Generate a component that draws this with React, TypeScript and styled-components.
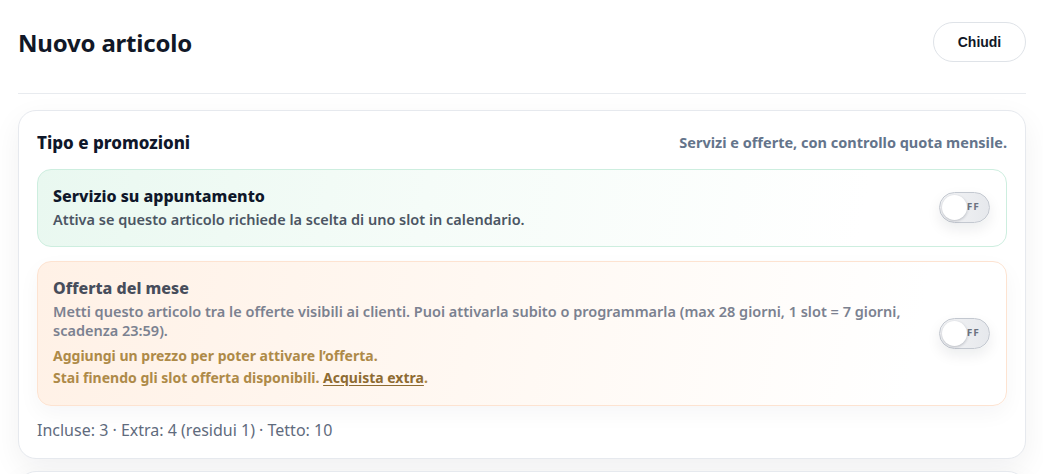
import React from "react";
import styled, { createGlobalStyle } from "styled-components";

const GlobalStyles = createGlobalStyle({
  "*": { boxSizing: "border-box" },
  body: {
    margin: 0,
    background: "#ffffff",
    fontFamily: "'Noto Sans', 'Open Sans', sans-serif",
    color: "#0f172a"
  }
});

const Page = styled.div({
  padding: "22px 17px 0 18px",
  display: "flex",
  flexDirection: "column"
});

const Header = styled.header({
  display: "flex",
  alignItems: "center",
  justifyContent: "space-between",
  height: 40
});

const Title = styled.h1({
  margin: 0,
  fontSize: 24,
  fontWeight: 700,
  color: "#111827",
  letterSpacing: -0.2
});

const CloseButton = styled.button({
  height: 40,
  width: 93,
  borderRadius: 999,
  border: "1px solid #dfe3e8",
  background: "#ffffff",
  fontFamily: "'Liberation Sans', Arial, sans-serif",
  fontWeight: 700,
  fontSize: 14,
  color: "#111827",
  cursor: "pointer"
});

const Divider = styled.hr({
  margin: "31px 0 16px",
  border: 0,
  borderTop: "1px solid #e8ebef"
});

const Card = styled.section({
  border: "1px solid #e6e9ee",
  borderRadius: 18,
  background: "#ffffff",
  boxShadow: "0 10px 30px rgba(15, 23, 42, 0.06)",
  padding: 18,
  display: "flex",
  flexDirection: "column",
  gap: 14
});

const NextCard = styled(Card)({
  marginTop: 12,
  height: 40
});

const CardHead = styled.div({
  display: "flex",
  alignItems: "center",
  justifyContent: "space-between",
  height: 26
});

const CardTitle = styled.h2({
  margin: 0,
  fontSize: 17,
  fontWeight: 800,
  color: "#0f172a"
});

const CardHint = styled.span({
  fontSize: 14.5,
  fontWeight: 700,
  color: "#64748b"
});

const Option = styled.div<{ $tone: "green" | "orange" }>(p => ({
  display: "flex",
  alignItems: "center",
  gap: 20,
  padding: "16px 15px",
  borderRadius: 14,
  border: p.$tone === "green" ? "1px solid #cdeedf" : "1px solid #fde3d1",
  background:
    p.$tone === "green"
      ? "linear-gradient(100deg, #e9f8f0 0%, #f5fcf8 40%, #ffffff 85%)"
      : "linear-gradient(100deg, #fff1e6 0%, #fff8f2 45%, #ffffff 90%)",
  boxShadow: p.$tone === "orange" ? "0 8px 22px rgba(15, 23, 42, 0.04)" : "none"
}));

const OptionText = styled.div({
  flex: 1,
  display: "flex",
  flexDirection: "column"
});

const OptionTitle = styled.div<{ $muted?: boolean }>(p => ({
  fontSize: 16,
  fontWeight: 800,
  lineHeight: "20px",
  color: p.$muted ? "#474d5b" : "#0f172a",
  marginBottom: 4
}));

const OptionDesc = styled.div<{ $muted?: boolean }>(p => ({
  fontSize: 14.5,
  fontWeight: 600,
  lineHeight: "19.5px",
  color: p.$muted ? "#7b8190" : "#4b5563"
}));

const Warning = styled.div<{ $first?: boolean }>(p => ({
  fontSize: 14,
  fontWeight: 700,
  lineHeight: "22px",
  color: "#ae8a48",
  marginTop: p.$first ? 4 : 0
}));

const WarningLink = styled.a({
  color: "#8e6b32",
  textDecoration: "underline",
  textUnderlineOffset: 2
});

const Toggle = styled.div({
  position: "relative",
  width: 51,
  height: 31,
  flexShrink: 0,
  borderRadius: 999,
  border: "1px solid #c3c8d0",
  background: "linear-gradient(90deg, #f3f4f6, #e6e8ec)",
  boxShadow: "0 6px 14px rgba(15, 23, 42, 0.08)",
  display: "flex",
  alignItems: "center",
  justifyContent: "flex-end",
  paddingRight: 9,
  marginRight: 1
});

const ToggleLabel = styled.span({
  fontFamily: "'DejaVu Sans', sans-serif",
  fontSize: 8,
  fontWeight: 700,
  letterSpacing: 1,
  color: "#6b7280"
});

const Knob = styled.span({
  position: "absolute",
  left: 2,
  top: 2,
  width: 25,
  height: 25,
  borderRadius: "50%",
  background: "#ffffff",
  boxShadow: "0 1px 3px rgba(15, 23, 42, 0.25)"
});

const Quota = styled.div({
  fontSize: 16,
  lineHeight: "20px",
  color: "#5f6b7d"
});

const Switch = () => (
  <Toggle>
    <ToggleLabel>OFF</ToggleLabel>
    <Knob />
  </Toggle>
);

export default function App() {
  return (
    <Page>
      <GlobalStyles />
      <Header>
        <Title>Nuovo articolo</Title>
        <CloseButton>Chiudi</CloseButton>
      </Header>
      <Divider />
      <Card>
        <CardHead>
          <CardTitle>Tipo e promozioni</CardTitle>
          <CardHint>Servizi e offerte, con controllo quota mensile.</CardHint>
        </CardHead>
        <Option $tone="green">
          <OptionText>
            <OptionTitle>Servizio su appuntamento</OptionTitle>
            <OptionDesc>Attiva se questo articolo richiede la scelta di uno slot in calendario.</OptionDesc>
          </OptionText>
          <Switch />
        </Option>
        <Option $tone="orange">
          <OptionText>
            <OptionTitle $muted>Offerta del mese</OptionTitle>
            <OptionDesc $muted>
              Metti questo articolo tra le offerte visibili ai clienti. Puoi attivarla subito o programmarla (max 28
              giorni, 1 slot = 7 giorni, scadenza 23:59).
            </OptionDesc>
            <Warning $first>Aggiungi un prezzo per poter attivare l’offerta.</Warning>
            <Warning>
              Stai finendo gli slot offerta disponibili. <WarningLink>Acquista extra</WarningLink>.
            </Warning>
          </OptionText>
          <Switch />
        </Option>
        <Quota>Incluse: 3 · Extra: 4 (residui 1) · Tetto: 10</Quota>
      </Card>
      <NextCard />
    </Page>
  );
}
